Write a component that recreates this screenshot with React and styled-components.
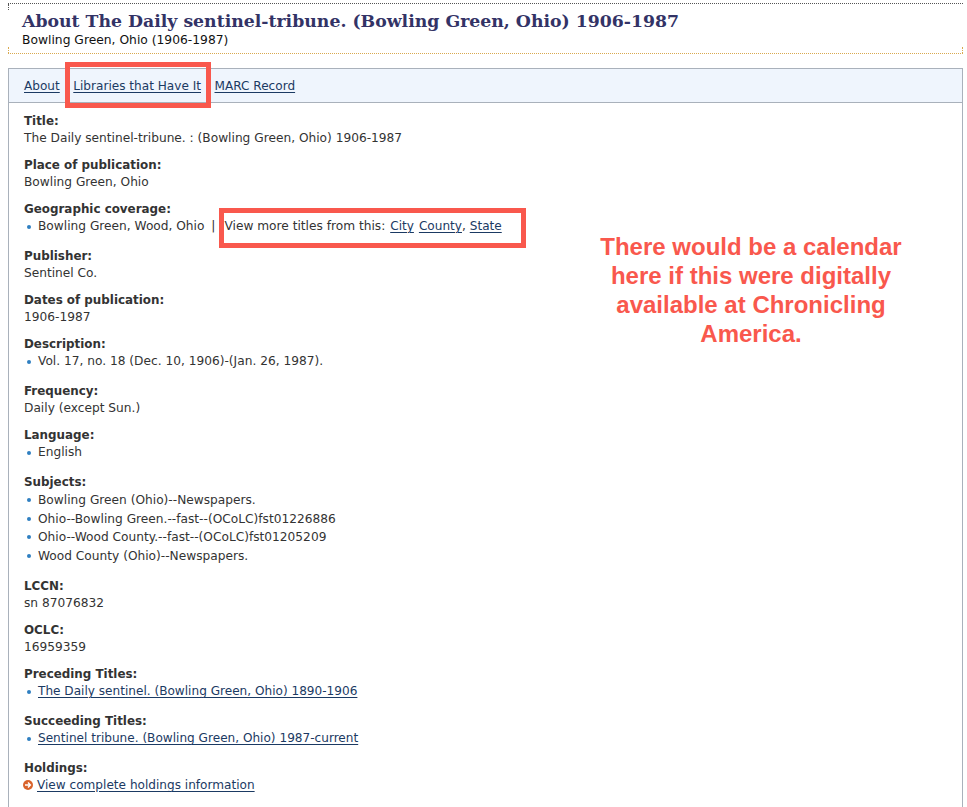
import React from 'react';
import styled, { createGlobalStyle } from 'styled-components';

const GlobalStyle = createGlobalStyle`
    html, body {
        margin: 0;
        padding: 0;
        background: #fff;
    }
    body {
        font-family: "DejaVu Sans", Verdana, sans-serif;
    }
`;

const Page = styled.div`
    position: relative;
    box-sizing: border-box;
    display: flex;
    flex-direction: column;
    height: 807px;
    padding: 3px 4px 0 8px;
`;

const Header = styled.header`
    position: relative;
    border-top: 1px dotted #555;
    border-bottom: 1px dotted #d9a94f;
    padding: 6px 0 7px 14px;
    height: 36px;
`;

const Tick = styled.span`
    position: absolute;
    height: 6px;
    ${(p) => (p.$bottom ? 'bottom: 0;' : 'top: 0;')}
    ${(p) => (p.$right ? 'right: 0;' : 'left: 0;')}
    border-left: 1px dotted ${(p) => (p.$bottom ? '#d9a94f' : '#555')};
`;

const Title = styled.h1`
    margin: 0;
    font-family: "DejaVu Serif", Georgia, serif;
    font-size: 17.3px;
    line-height: 23px;
    font-weight: bold;
    color: #333366;
`;

const Subtitle = styled.div`
    font-size: 12.3px;
    line-height: 14px;
    color: #111;
`;

const Panel = styled.main`
    flex: 1;
    margin-top: 14px;
    border: 1px solid #a9b1bb;
    border-bottom: none;
`;

const Tabs = styled.nav`
    display: flex;
    gap: 13.5px;
    height: 33px;
    align-items: center;
    padding: 0 15px;
    background: #eff5fd;
    border-bottom: 1px solid #a9b1bb;
`;

const Link = styled.a`
    color: #1b3a63;
    font-size: 12.1px;
    text-decoration: underline;
    text-underline-offset: 2px;
    text-decoration-thickness: 1px;
`;

const Body = styled.div`
    padding: 10px 15px 0;
`;

const Field = styled.section`
    margin-bottom: ${(p) => p.$gap || 10}px;
    font-size: 12.2px;
    line-height: 17px;
    color: #333;
`;

const Label = styled.div`
    font-size: 11.9px;
    font-weight: bold;
    color: #333;
`;

const List = styled.ul`
    margin: 0;
    padding: 0;
    list-style: none;
`;

const Item = styled.li`
    position: relative;
    padding-left: 14px;
    line-height: ${(p) => p.$line || 17}px;

    &::before {
        content: '';
        position: absolute;
        left: 3px;
        top: ${(p) => ((p.$line || 17) - 4) / 2}px;
        width: 4px;
        height: 4px;
        border-radius: 50%;
        background: #2f7fc1;
    }
`;

const Sep = styled.span`
    margin: 0 9px 0 3px;
`;

const More = styled.span`
    a:nth-of-type(1) {
        margin-left: 1px;
    }
    a:nth-of-type(2) {
        margin-left: 5px;
    }
`;

const Arrow = styled.svg`
    width: 10px;
    height: 10px;
    margin: 0 4px 0 -1px;
    vertical-align: -1px;
`;

const RedBox = styled.div`
    position: absolute;
    left: ${(p) => p.$x}px;
    top: ${(p) => p.$y}px;
    width: ${(p) => p.$w}px;
    height: ${(p) => p.$h}px;
    box-sizing: border-box;
    border: 5px solid #f9584d;
`;

const Note = styled.div`
    position: absolute;
    left: 588px;
    top: 232px;
    width: 326px;
    text-align: center;
    font-family: "Liberation Sans", Arial, sans-serif;
    font-weight: bold;
    font-size: 24px;
    line-height: 29px;
    color: #f9584d;
`;

const App = () => (
    <>
        <GlobalStyle />
        <Page>
            <Header>
                <Tick />
                <Tick $bottom />
                <Tick $bottom $right />
                <Title>About The Daily sentinel-tribune. (Bowling Green, Ohio) 1906-1987</Title>
                <Subtitle>Bowling Green, Ohio (1906-1987)</Subtitle>
            </Header>
            <Panel>
                <Tabs>
                    <Link href="#">About</Link>
                    <Link href="#">Libraries that Have It</Link>
                    <Link href="#">MARC Record</Link>
                </Tabs>
                <Body>
                    <Field>
                        <Label>Title:</Label>
                        The Daily sentinel-tribune. : (Bowling Green, Ohio) 1906-1987
                    </Field>
                    <Field>
                        <Label>Place of publication:</Label>
                        Bowling Green, Ohio
                    </Field>
                    <Field $gap={13}>
                        <Label>Geographic coverage:</Label>
                        <List>
                            <Item>
                                Bowling Green, Wood, Ohio <Sep>|</Sep>
                                <More>
                                    View more titles from this: <Link href="#">City</Link>
                                    <Link href="#">County</Link>, <Link href="#">State</Link>
                                </More>
                            </Item>
                        </List>
                    </Field>
                    <Field>
                        <Label>Publisher:</Label>
                        Sentinel Co.
                    </Field>
                    <Field>
                        <Label>Dates of publication:</Label>
                        1906-1987
                    </Field>
                    <Field $gap={13}>
                        <Label>Description:</Label>
                        <List>
                            <Item>Vol. 17, no. 18 (Dec. 10, 1906)-(Jan. 26, 1987).</Item>
                        </List>
                    </Field>
                    <Field>
                        <Label>Frequency:</Label>
                        Daily (except Sun.)
                    </Field>
                    <Field $gap={13}>
                        <Label>Language:</Label>
                        <List>
                            <Item>English</Item>
                        </List>
                    </Field>
                    <Field $gap={13}>
                        <Label>Subjects:</Label>
                        <List>
                            <Item $line={18.5}>Bowling Green (Ohio)--Newspapers.</Item>
                            <Item $line={18.5}>Ohio--Bowling Green.--fast--(OCoLC)fst01226886</Item>
                            <Item $line={18.5}>Ohio--Wood County.--fast--(OCoLC)fst01205209</Item>
                            <Item $line={18.5}>Wood County (Ohio)--Newspapers.</Item>
                        </List>
                    </Field>
                    <Field>
                        <Label>LCCN:</Label>
                        sn 87076832
                    </Field>
                    <Field>
                        <Label>OCLC:</Label>
                        16959359
                    </Field>
                    <Field $gap={13}>
                        <Label>Preceding Titles:</Label>
                        <List>
                            <Item><Link href="#">The Daily sentinel. (Bowling Green, Ohio) 1890-1906</Link></Item>
                        </List>
                    </Field>
                    <Field $gap={13}>
                        <Label>Succeeding Titles:</Label>
                        <List>
                            <Item><Link href="#">Sentinel tribune. (Bowling Green, Ohio) 1987-current</Link></Item>
                        </List>
                    </Field>
                    <Field>
                        <Label>Holdings:</Label>
                        <Arrow viewBox="0 0 10 10">
                            <circle cx="5" cy="5" r="5" fill="#d9622b" />
                            <path d="M2 5h5M5 2.6 7.4 5 5 7.4" fill="none" stroke="#fff" strokeWidth="1.4" />
                        </Arrow>
                        <Link href="#">View complete holdings information</Link>
                    </Field>
                </Body>
            </Panel>
            <RedBox $x={65} $y={62} $w={146} $h={46} />
            <RedBox $x={219} $y={208} $w={307} $h={40} />
            <Note>There would be a calendar here if this were digitally available at Chronicling America.</Note>
        </Page>
    </>
);

export default App;
